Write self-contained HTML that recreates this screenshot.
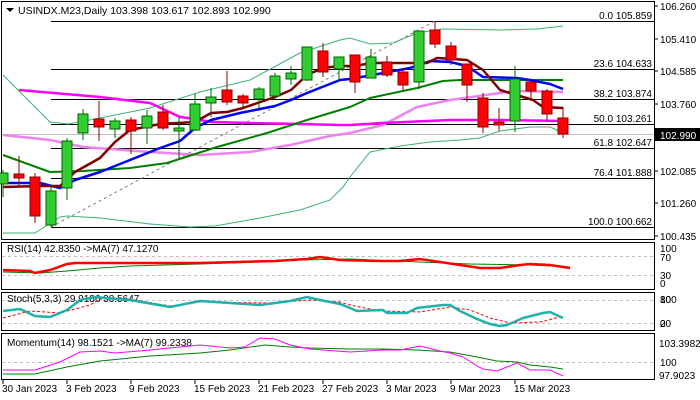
<!DOCTYPE html>
<html><head><meta charset="utf-8"><style>
html,body{margin:0;padding:0;background:#fff;}
svg{display:block;font-family:"Liberation Sans",sans-serif;font-size:10px;}
</style></head><body>
<svg width="700" height="400" viewBox="0 0 700 400" xmlns="http://www.w3.org/2000/svg">
<rect width="700" height="400" fill="#fff"/>
<g fill="none" stroke="#000" stroke-width="1">
<rect x="1.5" y="1.5" width="653" height="238"/>
<rect x="1.5" y="242.5" width="653" height="47"/>
<rect x="1.5" y="292.5" width="653" height="38"/>
<rect x="1.5" y="333.5" width="653" height="46"/>
</g>
<g stroke="#000" stroke-width="1">
<line x1="51" y1="21.5" x2="654" y2="21.5"/>
<line x1="51" y1="69.5" x2="654" y2="69.5"/>
<line x1="51" y1="99.5" x2="654" y2="99.5"/>
<line x1="51" y1="124.5" x2="654" y2="124.5"/>
<line x1="51" y1="148.5" x2="654" y2="148.5"/>
<line x1="51" y1="178.5" x2="654" y2="178.5"/>
<line x1="51" y1="227.5" x2="654" y2="227.5"/>
</g>
<line x1="2" y1="134.5" x2="654" y2="134.5" stroke="#c0c0c0"/>
<line x1="51" y1="227" x2="435" y2="21" stroke="#808080" stroke-dasharray="3,3"/>
<g font-size="10" text-anchor="end" fill="#000">
<text x="652" y="19">0.0 105.859</text>
<text x="652" y="67">23.6 104.633</text>
<text x="652" y="97">38.2 103.874</text>
<text x="652" y="122">50.0 103.261</text>
<text x="652" y="146">61.8 102.647</text>
<text x="652" y="176">76.4 101.888</text>
<text x="652" y="225">100.0 100.662</text>
</g>
<g fill="none" stroke="#3cb371" stroke-width="1">
<polyline points="3,75 50,122 68,124 100,118 150,108 200,92 250,80 300,53 340,40 350,38 370,44 393,43 417,33 443,29 500,30 537,29 563,26"/>
<polyline points="3,233 35,233 60,217 67,216 100,218 150,224 190,227 215,226 260,218 300,210 330,200 343,187 350,177 370,152 400,146 430,142 460,140 480,138 500,131 530,127 550,127 563,133"/>
</g>
<g fill="none" stroke-linejoin="round">
<polyline stroke="#ee82ee" stroke-width="2.5" points="3,135 50,140 83,147 150,152 200,155 250,152 290,145 330,136 350,133 383,125 417,107 450,100 500,93 517,91 563,92"/>
<polyline stroke="#ff00ff" stroke-width="2.5" points="19,90 100,97 150,103 180,117 195,119 211,122 250,123 300,124 340,125 350,125 383,123 450,120 500,120 563,121"/>
<polyline stroke="#008000" stroke-width="2" points="3,155 50,172 83,171 130,168 167,163 217,147 267,133 307,120 350,107 370,98 417,88 443,81 460,80 563,80"/>
<polyline stroke="#0000ff" stroke-width="2.5" points="3,183 40,183 60,188 75,180 100,172 130,160 160,148 180,141 195,128 211,120 240,113 275,106 291,100 307,93 340,80 350,79 367,76 410,68 430,61 450,62 467,66 483,77 517,78 530,80 550,84 563,89"/>
<polyline stroke="#800000" stroke-width="2.5" points="3,187 40,186 60,186 75,172 100,158 115,142 130,130 160,124 195,122 211,113 227,112 243,108 275,97 291,90 307,75 323,68 339,66 355,66 371,63 400,63 427,63 437,58 467,60 483,70 500,90 533,100 543,107 563,108"/>
</g>
<g stroke="#006400" fill="#32cd32">
<line x1="3" y1="170" x2="3" y2="197"/><rect x="-2" y="173" width="10" height="11"/>
<line x1="51" y1="185" x2="51" y2="227"/><rect x="46" y="191" width="10" height="34"/>
<line x1="67" y1="138" x2="67" y2="200"/><rect x="62" y="141" width="10" height="47"/>
<line x1="83" y1="109" x2="83" y2="140"/><rect x="78" y="114" width="10" height="19"/>
<line x1="115" y1="118" x2="115" y2="138"/><rect x="110" y="121" width="10" height="8"/>
<line x1="147" y1="110" x2="147" y2="144"/><rect x="142" y="116" width="10" height="12"/>
<line x1="179" y1="118" x2="179" y2="160"/><rect x="174" y="128" width="10" height="3"/>
<line x1="195" y1="94" x2="195" y2="131"/><rect x="190" y="104" width="10" height="26"/>
<line x1="211" y1="88" x2="211" y2="117"/><rect x="206" y="97" width="10" height="6"/>
<line x1="259" y1="87" x2="259" y2="108"/><rect x="254" y="89" width="10" height="10"/>
<line x1="275" y1="73" x2="275" y2="99"/><rect x="270" y="76" width="10" height="20"/>
<line x1="291" y1="66" x2="291" y2="85"/><rect x="286" y="73" width="10" height="6"/>
<line x1="307" y1="47" x2="307" y2="81"/><rect x="302" y="47" width="10" height="33"/>
<line x1="339" y1="57" x2="339" y2="81"/><rect x="334" y="57" width="10" height="12"/>
<line x1="371" y1="49" x2="371" y2="78"/><rect x="366" y="57" width="10" height="21"/>
<line x1="419" y1="31" x2="419" y2="89"/><rect x="414" y="31" width="10" height="51"/>
<line x1="515" y1="66" x2="515" y2="132"/><rect x="510" y="79" width="10" height="42"/>
</g>
<g stroke="#8b0000" fill="#ff0000">
<line x1="19" y1="156" x2="19" y2="186"/><rect x="14" y="174" width="10" height="4"/>
<line x1="35" y1="173" x2="35" y2="223"/><rect x="30" y="177" width="10" height="39"/>
<line x1="99" y1="101" x2="99" y2="141"/><rect x="94" y="119" width="10" height="8"/>
<line x1="131" y1="117" x2="131" y2="154"/><rect x="126" y="120" width="10" height="11"/>
<line x1="163" y1="105" x2="163" y2="130"/><rect x="158" y="112" width="10" height="16"/>
<line x1="227" y1="71" x2="227" y2="105"/><rect x="222" y="90" width="10" height="12"/>
<line x1="243" y1="94" x2="243" y2="107"/><rect x="238" y="96" width="10" height="7"/>
<line x1="323" y1="43" x2="323" y2="77"/><rect x="318" y="51" width="10" height="21"/>
<line x1="355" y1="55" x2="355" y2="93"/><rect x="350" y="55" width="10" height="27"/>
<line x1="387" y1="56" x2="387" y2="77"/><rect x="382" y="62" width="10" height="13"/>
<line x1="403" y1="68" x2="403" y2="91"/><rect x="398" y="72" width="10" height="13"/>
<line x1="435" y1="21" x2="435" y2="48"/><rect x="430" y="30" width="10" height="14"/>
<line x1="451" y1="42" x2="451" y2="65"/><rect x="446" y="46" width="10" height="14"/>
<line x1="467" y1="64" x2="467" y2="102"/><rect x="462" y="64" width="10" height="21"/>
<line x1="483" y1="93" x2="483" y2="133"/><rect x="478" y="98" width="10" height="29"/>
<line x1="499" y1="108" x2="499" y2="131"/><rect x="494" y="122" width="10" height="3"/>
<line x1="531" y1="82" x2="531" y2="99"/><rect x="526" y="82" width="10" height="9"/>
<line x1="547" y1="89" x2="547" y2="121"/><rect x="542" y="91" width="10" height="23"/>
<line x1="563" y1="107" x2="563" y2="138"/><rect x="558" y="118" width="10" height="16"/>
</g>
<path d="M6,8 L14,8 L10,12 Z" fill="#000"/>
<text x="18" y="14" font-size="10.5">USINDX.M23,Daily  103.398 103.617 102.893 102.990</text>
<g font-size="10" fill="#000">
<g stroke="#000"><line x1="654" y1="6" x2="658" y2="6"/><line x1="654" y1="39" x2="658" y2="39"/><line x1="654" y1="71" x2="658" y2="71"/><line x1="654" y1="104" x2="658" y2="104"/><line x1="654" y1="171" x2="658" y2="171"/><line x1="654" y1="203" x2="658" y2="203"/><line x1="654" y1="236" x2="658" y2="236"/></g>
<text x="660" y="10">106.260</text>
<text x="660" y="43">105.410</text>
<text x="660" y="75">104.585</text>
<text x="660" y="108">103.760</text>
<rect x="655" y="128" width="45" height="13" fill="#000"/>
<text x="660" y="139" fill="#fff">102.990</text>
<text x="660" y="175">102.085</text>
<text x="660" y="207">101.260</text>
<text x="660" y="240">100.435</text>
</g>
<g stroke="#c0c0c0" stroke-dasharray="3,3"><line x1="2" y1="256.5" x2="654" y2="256.5"/><line x1="2" y1="275.5" x2="654" y2="275.5"/>
<line x1="2" y1="300.5" x2="654" y2="300.5"/><line x1="2" y1="323.5" x2="654" y2="323.5"/><line x1="2" y1="362.5" x2="654" y2="362.5"/></g>
<text x="7" y="252">RSI(14) 42.8350  -&gt;MA(7) 47.1270</text>
<polyline fill="none" stroke="#008000" stroke-width="1" points="3,272 40,273 67,271 100,268 130,266 200,264 260,262 300,260 350,259 420,262 470,264 530,265 570,267"/>
<polyline fill="none" stroke="#ff0000" stroke-width="2.5" points="3,270 30,271 35,273 50,270 67,264 75,263 115,263 200,263 275,261 307,259 320,257 340,260 380,261 400,261 420,259 440,262 480,268 500,268 520,265 530,264 550,265 570,268"/>
<g><text x="660" y="252">100</text><text x="660" y="261">70</text><text x="660" y="279">30</text><text x="660" y="287">0</text></g>
<text x="7" y="302">Stoch(5,3,3) 29.9186 38.5647</text>
<polyline fill="none" stroke="#ff0000" stroke-width="1" stroke-dasharray="3,2" points="3,318 30,311 60,313 90,305 100,299 130,299 170,306 200,302 270,303 310,300 340,302 350,305 380,311 420,312 450,307 470,310 490,318 510,323 540,322 560,317 563,317"/>
<polyline fill="none" stroke="#20b2aa" stroke-width="2.5" points="3,311 20,309 35,316 50,317 67,310 80,300 95,297 130,300 170,307 200,301 230,303 260,305 290,301 307,297 320,300 340,304 350,308 357,311 383,310 387,313 407,313 417,308 443,305 450,305 460,311 477,319 490,324 500,326 507,325 523,318 543,313 550,312 563,318"/>
<g><text x="660" y="303">100</text><text x="660" y="303">80</text><text x="660" y="327">20</text><text x="660" y="327">0</text></g>
<text x="7" y="346">Momentum(14) 98.1521  -&gt;MA(7) 99.2338</text>
<polyline fill="none" stroke="#008000" stroke-width="1" points="3,374 35,374 67,367 100,361 150,356 200,353 230,350 265,345 290,347 310,348 350,349 383,349 417,350 450,352 477,357 497,361 517,362 530,365 550,367 563,369"/>
<polyline fill="none" stroke="#ff00ff" stroke-width="1" points="3,370 35,370 60,362 80,352 100,351 115,353 150,350 200,345 230,348 245,347 260,338 275,339 290,345 310,349 350,352 383,350 400,350 420,346 440,351 450,353 463,357 477,366 483,369 497,371 517,363 530,370 550,370 563,376"/>
<g><text x="659" y="347">103.3982</text><text x="660" y="366">100</text><text x="659" y="379">97.9023</text></g>
<g stroke="#000"><line x1="3" y1="380" x2="3" y2="384"/><line x1="67" y1="380" x2="67" y2="384"/><line x1="131" y1="380" x2="131" y2="384"/><line x1="195" y1="380" x2="195" y2="384"/><line x1="259" y1="380" x2="259" y2="384"/><line x1="323" y1="380" x2="323" y2="384"/><line x1="387" y1="380" x2="387" y2="384"/><line x1="451" y1="380" x2="451" y2="384"/><line x1="515" y1="380" x2="515" y2="384"/></g>
<g><text x="2" y="392">30 Jan 2023</text><text x="66" y="392">3 Feb 2023</text><text x="129" y="392">9 Feb 2023</text><text x="194" y="392">15 Feb 2023</text><text x="258" y="392">21 Feb 2023</text><text x="322" y="392">27 Feb 2023</text><text x="386" y="392">3 Mar 2023</text><text x="450" y="392">9 Mar 2023</text><text x="514" y="392">15 Mar 2023</text></g>
</svg>
</body></html>
